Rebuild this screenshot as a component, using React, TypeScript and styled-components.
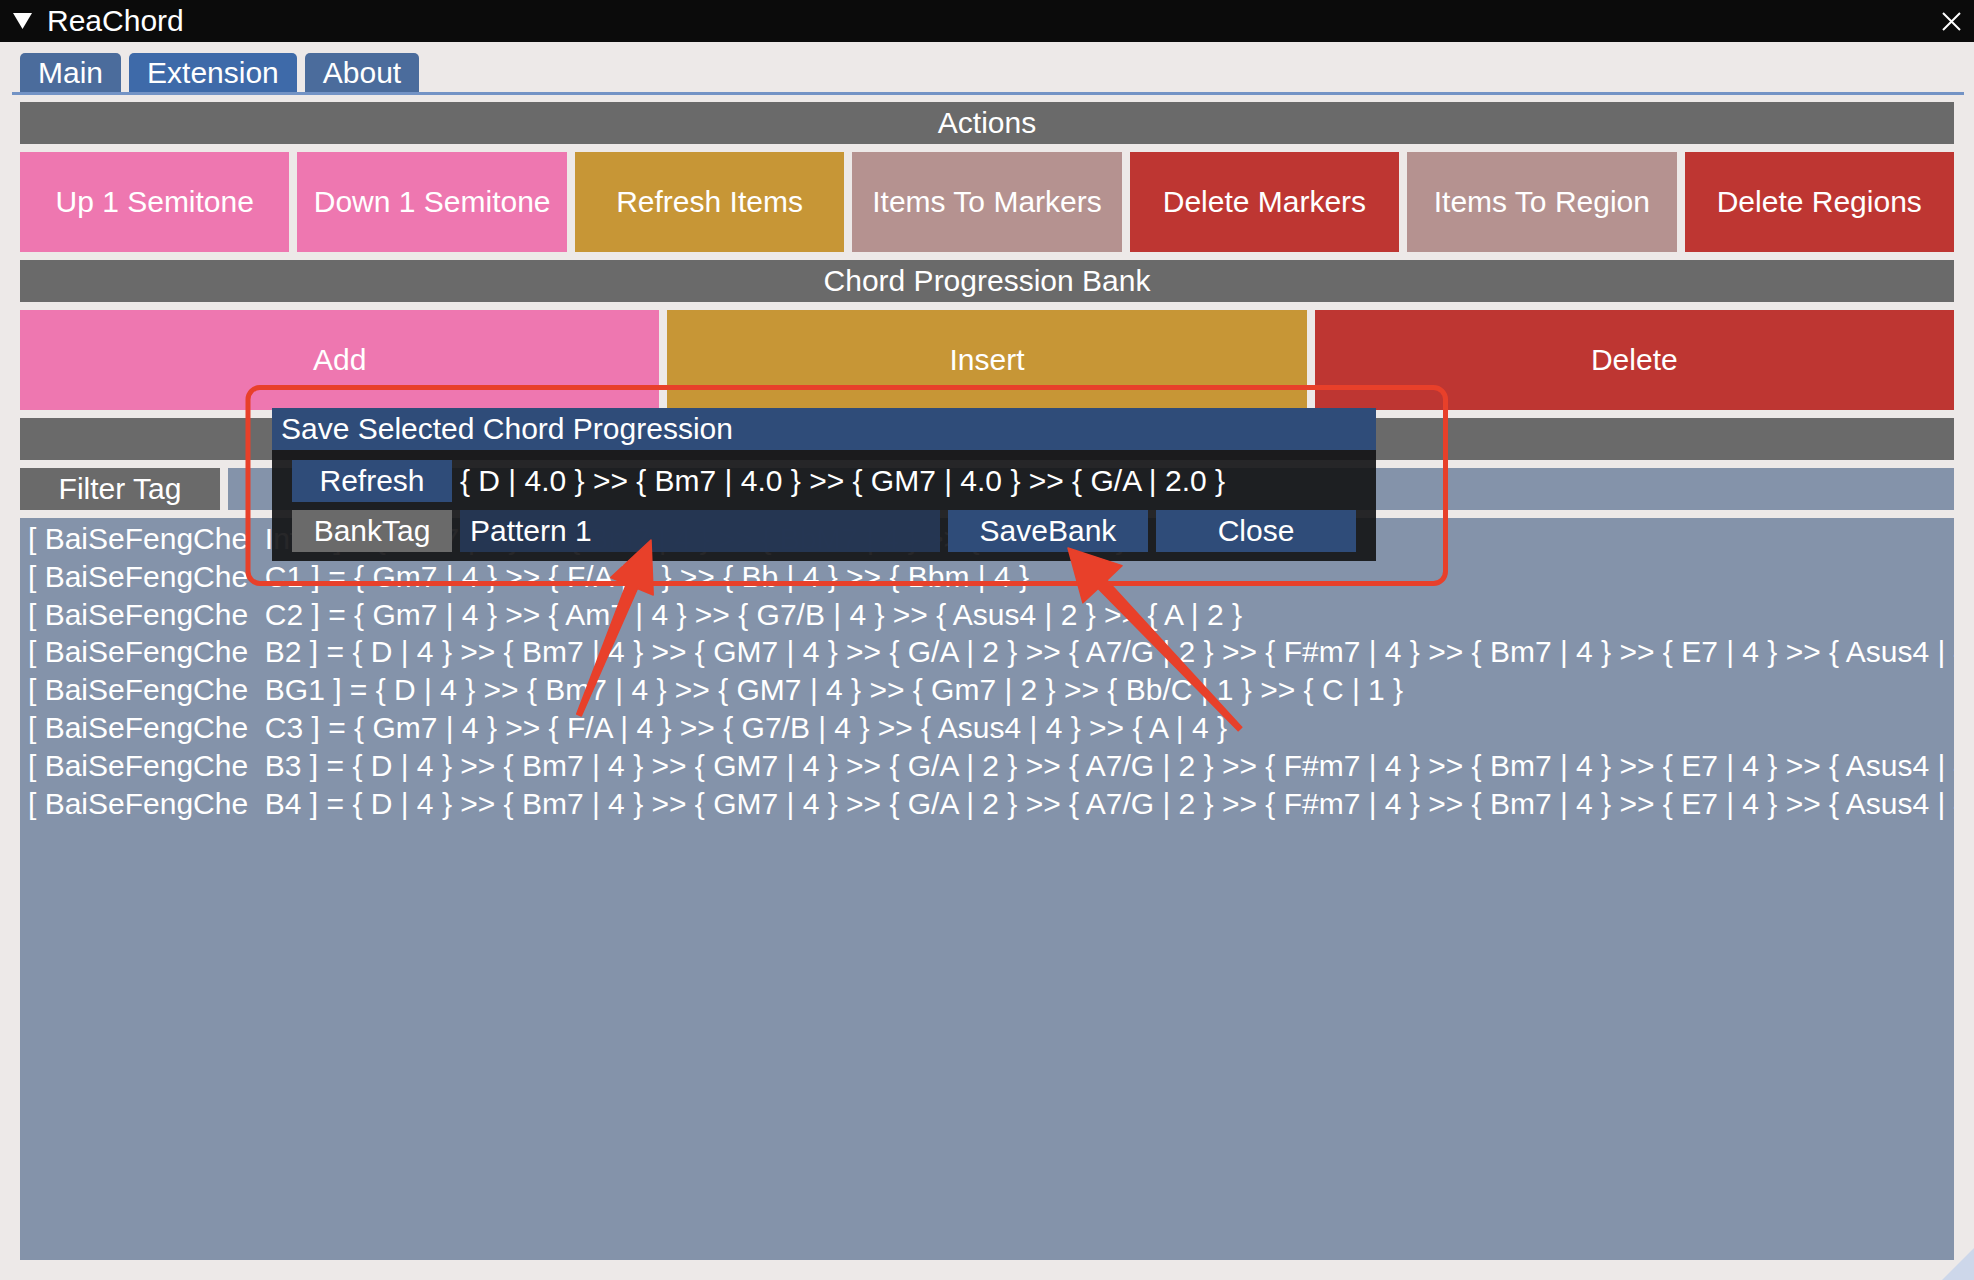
import styled, { createGlobalStyle } from 'styled-components';

const GlobalStyle = createGlobalStyle`
    html, body {
        margin: 0;
        padding: 0;
        background: #ede9e8;
    }
    body {
        font-family: "Liberation Sans", Arial, sans-serif;
    }
`;

const tones: Record<string, string> = {
    pink: '#ee77b0',
    gold: '#c79636',
    rose: '#b59290',
    red: '#be3632',
    gray: '#6a6a6a',
    blue: '#2f4c79',
};

const Window = styled.div`
    position: relative;
    width: 1974px;
    height: 1280px;
    overflow: hidden;
    background: #ede9e8;
    color: #fff;
    font-size: 30px;
    display: flex;
    flex-direction: column;
`;

const TitleBar = styled.div`
    height: 42px;
    flex-shrink: 0;
    background: #0b0b0b;
    display: flex;
    align-items: center;
    padding: 0 13px;
    gap: 15px;
`;

const Title = styled.span`
    flex: 1;
    font-size: 30px;
    line-height: 42px;
`;

const TabBar = styled.div`
    display: flex;
    gap: 8px;
    margin: 11px 10px 0 12px;
    padding-left: 8px;
    border-bottom: 3px solid #7393c5;
`;

const Tab = styled.div<{ $active?: boolean }>`
    height: 39px;
    line-height: 39px;
    padding: 0 18px;
    border-radius: 5px 5px 0 0;
    background: ${(p) => (p.$active ? '#3e6aa9' : '#4b6c9c')};
`;

const Content = styled.div`
    flex: 1;
    min-height: 0;
    display: flex;
    flex-direction: column;
    gap: 8px;
    padding: 7px 20px 20px;
`;

const SectionHeader = styled.div`
    height: 42px;
    flex-shrink: 0;
    background: #6a6a6a;
    display: flex;
    align-items: center;
    justify-content: center;
`;

const ButtonRow = styled.div<{ $cols: number }>`
    display: grid;
    grid-template-columns: repeat(${(p) => p.$cols}, 1fr);
    gap: 8px;
    height: 100px;
    flex-shrink: 0;
`;

const ActionButton = styled.div<{ $tone: string }>`
    background: ${(p) => tones[p.$tone]};
    display: flex;
    align-items: center;
    justify-content: center;
    white-space: nowrap;
`;

const FilterRow = styled.div`
    display: grid;
    grid-template-columns: 200px 1fr;
    gap: 8px;
    height: 42px;
    flex-shrink: 0;
`;

const FilterLabel = styled.div`
    background: #6a6a6a;
    display: flex;
    align-items: center;
    justify-content: center;
`;

const FilterInput = styled.div`
    background: #8493aa;
`;

const ChordList = styled.div`
    flex: 1;
    min-height: 0;
    background: #8493aa;
    padding: 2px 8px;
    overflow: hidden;
`;

const ChordRow = styled.div`
    line-height: 37.8px;
    white-space: nowrap;
`;

const Dialog = styled.div`
    position: absolute;
    left: 272px;
    top: 408px;
    width: 1104px;
    display: flex;
    flex-direction: column;
    background: rgba(21, 21, 23, 0.92);
`;

const DialogTitle = styled.div`
    height: 42px;
    line-height: 42px;
    padding-left: 9px;
    background: #2f4c79;
`;

const DialogBody = styled.div`
    display: flex;
    flex-direction: column;
    gap: 8px;
    padding: 10px 20px 9px;
`;

const DialogRow = styled.div<{ $cols: string }>`
    display: grid;
    grid-template-columns: ${(p) => p.$cols};
    gap: 8px;
    height: 42px;
`;

const DialogButton = styled.div<{ $tone: string }>`
    background: ${(p) => tones[p.$tone]};
    display: flex;
    align-items: center;
    justify-content: center;
`;

const ChordPreview = styled.div`
    display: flex;
    align-items: center;
    white-space: nowrap;
`;

const PatternInput = styled.div`
    background: rgba(38, 56, 86, 0.93);
    display: flex;
    align-items: center;
    padding-left: 10px;
`;

const Overlay = styled.svg`
    position: absolute;
    left: 0;
    top: 0;
    pointer-events: none;
`;

const ResizeGrip = styled.div`
    position: absolute;
    right: 0;
    bottom: 0;
    width: 32px;
    height: 32px;
    background: #cdd7ea;
    clip-path: polygon(100% 0, 100% 100%, 0 100%);
`;

const actions = [
    { label: 'Up 1 Semitone', tone: 'pink' },
    { label: 'Down 1 Semitone', tone: 'pink' },
    { label: 'Refresh Items', tone: 'gold' },
    { label: 'Items To Markers', tone: 'rose' },
    { label: 'Delete Markers', tone: 'red' },
    { label: 'Items To Region', tone: 'rose' },
    { label: 'Delete Regions', tone: 'red' },
];

const bankActions = [
    { label: 'Add', tone: 'pink' },
    { label: 'Insert', tone: 'gold' },
    { label: 'Delete', tone: 'red' },
];

const longB = '{ D | 4 } >> { Bm7 | 4 } >> { GM7 | 4 } >> { G/A | 2 } >> { A7/G | 2 } >> { F#m7 | 4 } >> { Bm7 | 4 } >> { E7 | 4 } >> { Asus4 | 4 }';

const progressions = [
    ['Intro', '{ Gm7 | 4 } >> { Bm7 | 4 } >> { BbM7 | 4 } >> { Bbm6 | 4 }'],
    ['C1', '{ Gm7 | 4 } >> { F/A | 4 } >> { Bb | 4 } >> { Bbm | 4 }'],
    ['C2', '{ Gm7 | 4 } >> { Am7 | 4 } >> { G7/B | 4 } >> { Asus4 | 2 } >> { A | 2 }'],
    ['B2', longB],
    ['BG1', '{ D | 4 } >> { Bm7 | 4 } >> { GM7 | 4 } >> { Gm7 | 2 } >> { Bb/C | 1 } >> { C | 1 }'],
    ['C3', '{ Gm7 | 4 } >> { F/A | 4 } >> { G7/B | 4 } >> { Asus4 | 4 } >> { A | 4 }'],
    ['B3', longB],
    ['B4', longB],
];

type ArrowSpec = { from: [number, number]; to: [number, number]; head: number; wing: number };

// tapered annotation arrow as a polygon
const arrowPoints = ({ from, to, head, wing }: ArrowSpec) => {
    const [x1, y1] = from;
    const [x2, y2] = to;
    const len = Math.hypot(x2 - x1, y2 - y1);
    const dx = (x2 - x1) / len;
    const dy = (y2 - y1) / len;
    const nx = -dy;
    const ny = dx;
    const bx = x2 - dx * head;
    const by = y2 - dy * head;
    const tail = 2.5;
    const neck = 6;
    const pts = [
        [x1 + nx * tail, y1 + ny * tail],
        [bx + nx * neck, by + ny * neck],
        [bx + nx * wing, by + ny * wing],
        [x2, y2],
        [bx - nx * wing, by - ny * wing],
        [bx - nx * neck, by - ny * neck],
        [x1 - nx * tail, y1 - ny * tail],
    ];
    return pts.map((p) => p.map((v) => v.toFixed(1)).join(',')).join(' ');
};

const arrows: ArrowSpec[] = [
    { from: [579, 715], to: [651, 540], head: 50, wing: 23 },
    { from: [1240, 729], to: [1068, 548], head: 50, wing: 27 },
];

function App() {
    return (
        <Window>
            <GlobalStyle />
            <TitleBar>
                <svg width="19" height="16" viewBox="0 0 19 16">
                    <polygon points="0,0 19,0 9.5,16" fill="#fff" />
                </svg>
                <Title>ReaChord</Title>
                <svg width="19" height="19" viewBox="0 0 19 19">
                    <path d="M1 1 L18 18 M18 1 L1 18" stroke="#fff" strokeWidth="2" />
                </svg>
            </TitleBar>

            <TabBar>
                <Tab>Main</Tab>
                <Tab $active>Extension</Tab>
                <Tab>About</Tab>
            </TabBar>

            <Content>
                <SectionHeader>Actions</SectionHeader>
                <ButtonRow $cols={actions.length}>
                    {actions.map((a) => (
                        <ActionButton key={a.label} $tone={a.tone}>{a.label}</ActionButton>
                    ))}
                </ButtonRow>
                <SectionHeader>Chord Progression Bank</SectionHeader>
                <ButtonRow $cols={bankActions.length}>
                    {bankActions.map((a) => (
                        <ActionButton key={a.label} $tone={a.tone}>{a.label}</ActionButton>
                    ))}
                </ButtonRow>
                <SectionHeader />
                <FilterRow>
                    <FilterLabel>Filter Tag</FilterLabel>
                    <FilterInput />
                </FilterRow>
                <ChordList>
                    {progressions.map(([name, chords], i) => (
                        <ChordRow key={i}>
                            [ BaiSeFengChe&nbsp; {name} ] = {chords}
                        </ChordRow>
                    ))}
                </ChordList>
            </Content>

            <Dialog>
                <DialogTitle>Save Selected Chord Progression</DialogTitle>
                <DialogBody>
                    <DialogRow $cols="160px 1fr">
                        <DialogButton $tone="blue">Refresh</DialogButton>
                        <ChordPreview>{'{ D | 4.0 } >> { Bm7 | 4.0 } >> { GM7 | 4.0 } >> { G/A | 2.0 }'}</ChordPreview>
                    </DialogRow>
                    <DialogRow $cols="160px 1fr 200px 200px">
                        <DialogButton $tone="gray">BankTag</DialogButton>
                        <PatternInput>Pattern 1</PatternInput>
                        <DialogButton $tone="blue">SaveBank</DialogButton>
                        <DialogButton $tone="blue">Close</DialogButton>
                    </DialogRow>
                </DialogBody>
            </Dialog>

            <Overlay width="1974" height="1280" viewBox="0 0 1974 1280">
                <rect x="248" y="387.5" width="1197.5" height="196" rx="12" fill="none" stroke="#e8402a" strokeWidth="5" />
                {arrows.map((a, i) => (
                    <polygon key={i} points={arrowPoints(a)} fill="#e8402a" strokeLinejoin="round" stroke="#e8402a" strokeWidth="1.5" />
                ))}
            </Overlay>

            <ResizeGrip />
        </Window>
    );
}

export default App;
